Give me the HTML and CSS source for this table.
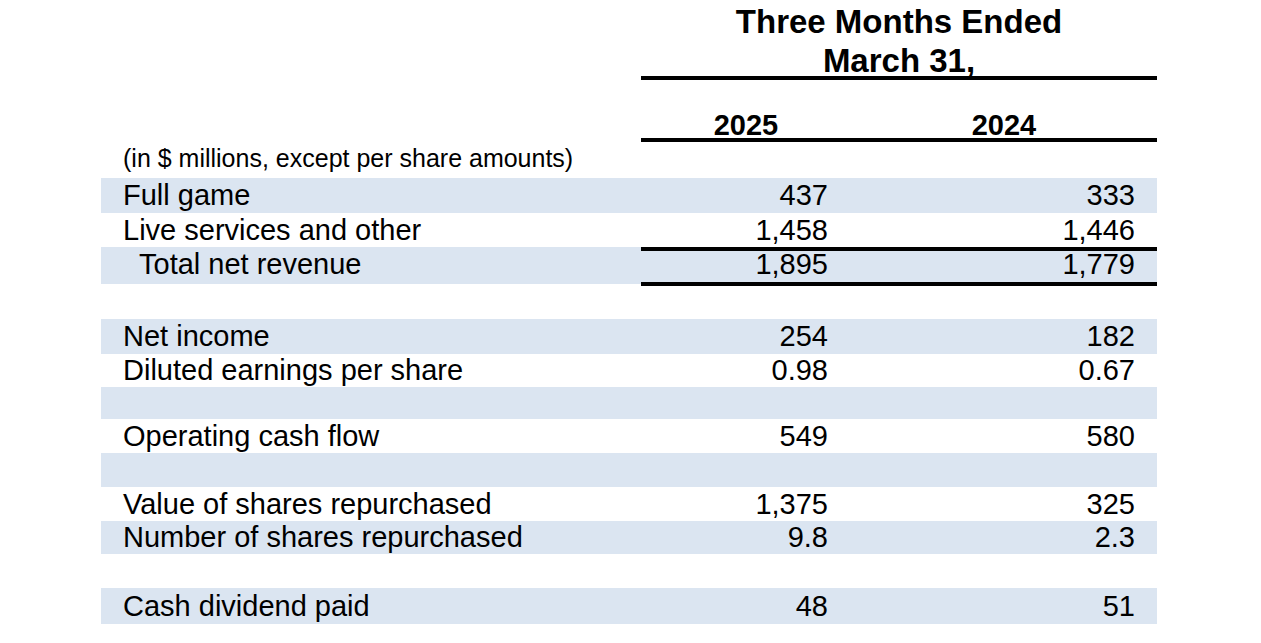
FILE: index.html
```html
<!DOCTYPE html>
<html>
<head>
<meta charset="utf-8">
<link rel="stylesheet" href="styles.css">
</head>
<body>
<div class="sheet">
  <div class="head">
    <div class="title">Three Months Ended<br>March 31,</div>
  </div>
  <div class="years">
    <div></div>
    <div class="year">2025</div>
    <div class="year">2024</div>
  </div>
  <div class="units">(in $ millions, except per share amounts)</div>

  <div class="row band h35"><div class="lbl">Full game</div><div class="v1">437</div><div class="v2">333</div></div>
  <div class="row rule"><div class="lbl">Live services and other</div><div class="v1">1,458</div><div class="v2">1,446</div></div>
  <div class="row band rule h37"><div class="lbl indent">Total net revenue</div><div class="v1">1,895</div><div class="v2">1,779</div></div>
  <div class="row h35"></div>
  <div class="row band h35"><div class="lbl">Net income</div><div class="v1">254</div><div class="v2">182</div></div>
  <div class="row h33"><div class="lbl">Diluted earnings per share</div><div class="v1">0.98</div><div class="v2">0.67</div></div>
  <div class="row band h32"></div>
  <div class="row"><div class="lbl">Operating cash flow</div><div class="v1">549</div><div class="v2">580</div></div>
  <div class="row band"></div>
  <div class="row"><div class="lbl">Value of shares repurchased</div><div class="v1">1,375</div><div class="v2">325</div></div>
  <div class="row band h33"><div class="lbl">Number of shares repurchased</div><div class="v1">9.8</div><div class="v2">2.3</div></div>
  <div class="row"></div>
  <div class="row band h36"><div class="lbl">Cash dividend paid</div><div class="v1">48</div><div class="v2">51</div></div>
</div>
</body>
</html>
```

FILE: styles.css
```css
html, body {
  margin: 0;
  padding: 0;
  background: #ffffff;
}

.sheet {
  margin-left: 101px;
  width: 1056px;
  font-family: "Liberation Sans", Arial, sans-serif;
  color: #000000;
}

.head {
  padding-left: 540px;
}

.title {
  font-weight: bold;
  font-size: 33px;
  line-height: 39px;
  text-align: center;
  height: 74px;
  padding-top: 2px;
  border-bottom: 4px solid #000000;
}

.years {
  display: grid;
  grid-template-columns: 540px 258px 258px;
  height: 62px;
}

.year {
  box-sizing: border-box;
  height: 62px;
  padding-top: 31px;
  padding-right: 48px;
  font-weight: bold;
  font-size: 29px;
  line-height: 29px;
  text-align: center;
  border-bottom: 4px solid #000000;
}

.units {
  height: 36px;
  line-height: 32px;
  font-size: 25px;
  padding-left: 22px;
}

.row {
  display: grid;
  grid-template-columns: 540px 258px 258px;
  height: 34px;
  line-height: 34px;
  font-size: 29px;
}

.row.h32 { height: 32px; line-height: 32px; }
.row.h33 { height: 33px; line-height: 33px; }
.row.h35 { height: 35px; line-height: 35px; }
.row.h36 { height: 36px; line-height: 36px; }
.row.h37 { height: 37px; line-height: 35px; }

.band {
  background: #dbe5f1;
}

.lbl {
  padding-left: 22px;
  white-space: nowrap;
}

.lbl.indent {
  padding-left: 38px;
}

.v1, .v2 {
  text-align: right;
  box-sizing: border-box;
}

.v1 { padding-right: 71px; }
.v2 { padding-right: 22px; }

.rule .v1,
.rule .v2 {
  border-bottom: 4px solid #000000;
}
```
